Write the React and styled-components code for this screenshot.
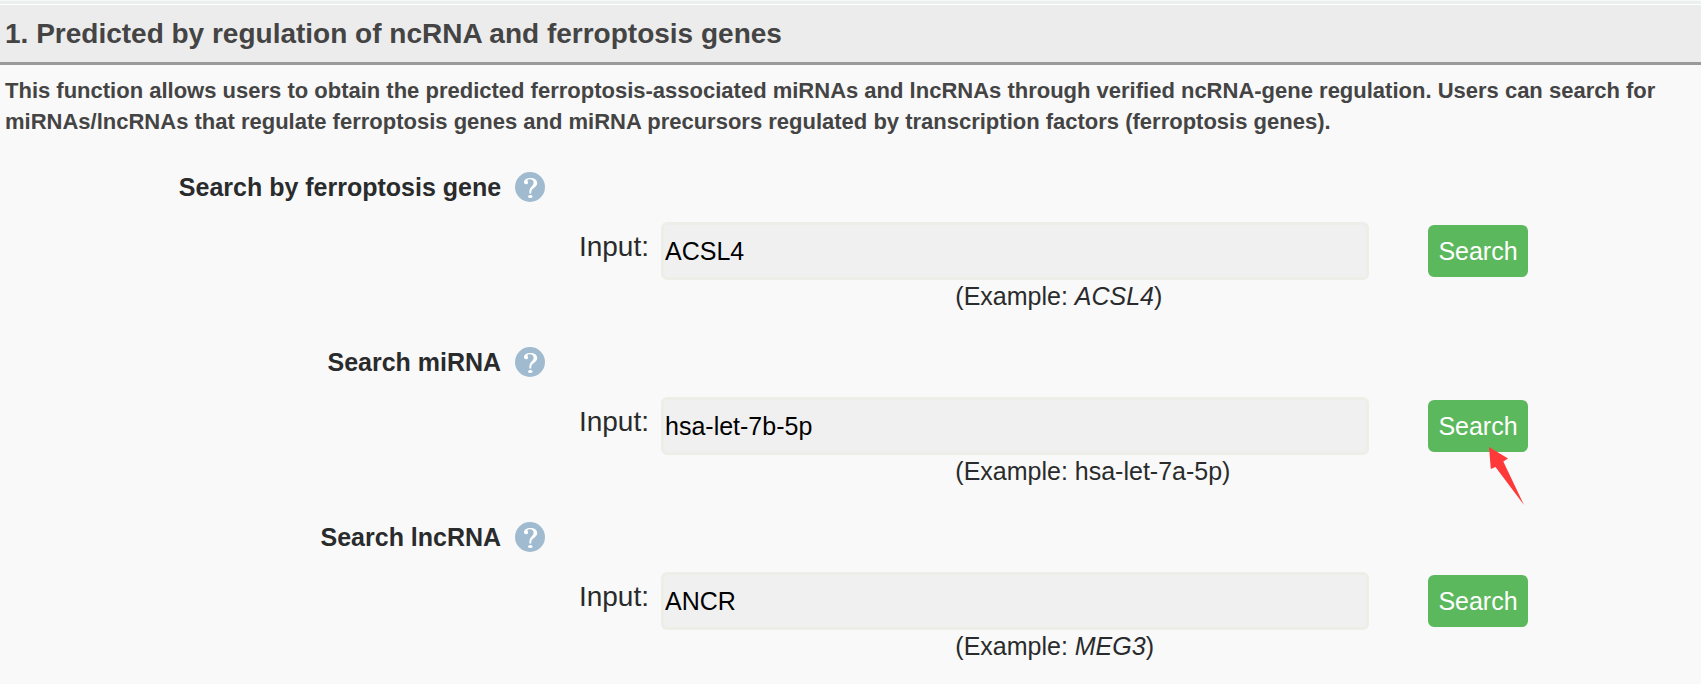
import React, { useId } from "react";
import styled, { createGlobalStyle } from "styled-components";

const colors = {
  page: "#f9f9f9",
  header: "#ececec",
  headerLine: "#999b9a",
  text: "#444444",
  dark: "#292b2c",
  field: "#f0f0f0",
  fieldBorder: "#edeee8",
  green: "#5cb85c",
  help: "#a0bbd0",
  arrow: "#fd3a39",
};

const searches = [
  { title: "Search by ferroptosis gene", value: "ACSL4", example: <em>ACSL4</em> },
  {
    title: "Search miRNA",
    value: "hsa-let-7b-5p",
    example: "hsa-let-7a-5p",
    pointed: true,
  },
  { title: "Search lncRNA", value: "ANCR", example: <em>MEG3</em> },
];

const HelpIcon = () => (
  <svg width="30" height="30" viewBox="0 0 30 30" aria-hidden="true">
    <circle cx="15" cy="15" r="15" fill={colors.help} />
    <path
      d="M9 10.3C9 7.6 11.5 6 15.2 6C19.4 6 22.2 7.9 22.2 11C22.2 13.6 20.4 14.9 18.5 16.2C16.7 17.5 16.2 18.7 16.2 21.5H14.4C14.2 18.2 14.8 16.5 16.4 14.7C17.8 13.1 18.6 12.4 18.6 10.7C18.6 8.7 17.2 7.3 15 7.3C13.5 7.3 12.4 7.8 12.4 8.5C12.4 9.1 13.1 9.4 13.1 10.4C13.1 11.5 12.3 12.2 11.2 12.2C9.9 12.2 9 11.5 9 10.3Z"
      fill="#fff"
    />
    <ellipse cx="15.3" cy="24.6" rx="2.3" ry="1.5" fill="#fff" />
  </svg>
);

const SearchGroup = ({ title, value, example, pointed }) => {
  const id = useId();
  return (
    <Group>
      <Title>
        {title}
        <HelpIcon />
      </Title>
      <Label htmlFor={id}>Input:</Label>
      <Field id={id} type="text" defaultValue={value} />
      <Action>
        <SearchButton type="submit">Search</SearchButton>
        {pointed && (
          <Arrow width="36" height="59" viewBox="0 0 36 59" aria-hidden="true">
            <path
              d="M0 0L19 11.5L14.3 14.5L35 58L6.5 20L1.8 22Z"
              fill={colors.arrow}
            />
          </Arrow>
        )}
      </Action>
      <Example>(Example: {example})</Example>
    </Group>
  );
};

const App = () => (
  <Page>
    <GlobalStyle />
    <Header>1. Predicted by regulation of ncRNA and ferroptosis genes</Header>
    <Description>
      This function allows users to obtain the predicted ferroptosis-associated
      miRNAs and lncRNAs through verified ncRNA-gene regulation. Users can
      search for miRNAs/lncRNAs that regulate ferroptosis genes and miRNA
      precursors regulated by transcription factors (ferroptosis genes).
    </Description>
    <Searches>
      {searches.map((search) => (
        <SearchGroup key={search.title} {...search} />
      ))}
    </Searches>
  </Page>
);

const GlobalStyle = createGlobalStyle`
  * {
    box-sizing: border-box;
  }

  body {
    margin: 0;
    background: ${colors.page};
    color: ${colors.dark};
    font-family: "Liberation Sans", Arial, sans-serif;
    font-size: 25px;
  }
`;

const Page = styled.main`
  padding-top: 1px;
`;

const Header = styled.h1`
  margin: 0;
  padding: 13px 5px 12px;
  border-top: 3px solid #e9f0ee;
  border-bottom: 3px solid ${colors.headerLine};
  background: ${colors.header};
  box-shadow: inset 0 1px #fff;
  color: ${colors.text};
  font-size: 28px;
  line-height: 33px;
`;

const Description = styled.p`
  margin: 0;
  padding: 10px 5px 0;
  color: ${colors.text};
  font-size: 22px;
  font-weight: bold;
  line-height: 31px;
`;

const Searches = styled.div`
  padding-top: 35px;
`;

const Group = styled.form`
  display: grid;
  grid-template-columns: 661fr 708fr 332fr;
  margin-bottom: 36px;

  &:last-child {
    margin-bottom: 0;
  }
`;

const Title = styled.h2`
  display: flex;
  grid-column: 1 / -1;
  align-items: center;
  justify-content: flex-end;
  gap: 14px;
  width: 32.05%;
  margin: 0 0 20px;
  font-size: 25px;
  line-height: 30px;
  white-space: nowrap;
`;

const Label = styled.label`
  padding: 9px 12px 0 0;
  font-size: 28px;
  line-height: 32px;
  text-align: right;
`;

const Field = styled.input`
  width: 100%;
  height: 58px;
  padding: 1px 1px 0;
  border: 3px solid ${colors.fieldBorder};
  border-radius: 6px;
  background: ${colors.field};
  color: #000;
  font: inherit;
`;

const Action = styled.div`
  position: relative;
  padding: 3px 0 0 59px;
`;

const SearchButton = styled.button`
  width: 100px;
  height: 52px;
  padding: 0;
  border: 0;
  border-radius: 6px;
  background: ${colors.green};
  color: #fff;
  font: inherit;
`;

const Arrow = styled.svg`
  position: absolute;
  top: 50px;
  left: 120px;
`;

const Example = styled.p`
  grid-column: 2 / -1;
  margin: 0;
  padding: 1px 0 0 28.3%;
  line-height: 30px;
`;

export default App;
